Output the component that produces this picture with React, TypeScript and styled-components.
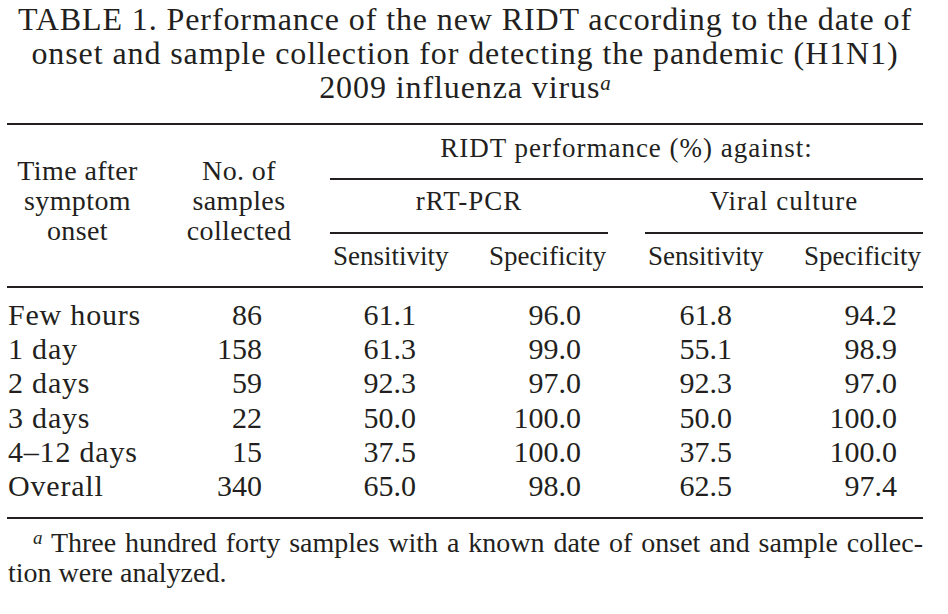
import React from "react";
import styled, { createGlobalStyle, css } from "styled-components";

const INK = "#231f20";
const COLS = "141px 182px 140px 138px 37px 140px 138px";

const GlobalStyle = createGlobalStyle`
  html, body {
    margin: 0;
    padding: 0;
    background: #fff;
  }
  body {
    font-family: "Liberation Serif", "Times New Roman", serif;
    color: ${INK};
  }
`;

const Page = styled.div`
  width: 916px;
  margin-left: 7px;
  padding-top: 2px;
`;

const Caption = styled.h1`
  margin: 0;
  font-weight: normal;
  font-size: 32px;
  line-height: 34px;
  letter-spacing: 0.9px;
  text-align: center;
`;

const Sup = styled.span<{ $size: number; $raise: number }>`
  display: inline-block;
  font-style: italic;
  font-size: ${(p) => p.$size}px;
  line-height: 14px;
  vertical-align: ${(p) => p.$raise}px;
  letter-spacing: 0;
  text-indent: 0;
`;

const Head = styled.div`
  display: grid;
  grid-template-columns: ${COLS};
  grid-template-rows: 55px 54px 52px;
  margin-top: 19px;
  border-top: 2px solid ${INK};
  border-bottom: 2px solid ${INK};
  font-size: 27px;
  line-height: 30px;
`;

const StubHead = styled.div<{ $col: number }>`
  grid-column: ${(p) => p.$col};
  grid-row: 1 / 4;
  padding-top: 31px;
  font-size: 28px;
  letter-spacing: 0.4px;
  text-align: center;
`;

const SpanHead = styled.div<{ $cols: string; $row: number; $pt: number }>`
  grid-column: ${(p) => p.$cols};
  grid-row: ${(p) => p.$row};
  padding-top: ${(p) => p.$pt}px;
  border-bottom: 2px solid ${INK};
  letter-spacing: 1px;
  text-align: center;
`;

const SubHead = styled.div<{ $col: number; $right?: boolean }>`
  grid-column: ${(p) => p.$col};
  grid-row: 3;
  padding-top: 7px;
  ${(p) =>
    p.$right
      ? css`
          text-align: right;
          padding-right: 2px;
        `
      : css`
          text-align: left;
          padding-left: 3px;
        `}
`;

const Body = styled.div`
  padding: 10px 0 14px;
  border-bottom: 2px solid ${INK};
`;

const Row = styled.div`
  display: grid;
  grid-template-columns: ${COLS};
  font-size: 30px;
  line-height: 34.2px;
`;

const Label = styled.span`
  grid-column: 1;
  padding-left: 1px;
  letter-spacing: 0.8px;
  white-space: nowrap;
`;

const Num = styled.span<{ $col: number; $pr: number }>`
  grid-column: ${(p) => p.$col};
  text-align: right;
  padding-right: ${(p) => p.$pr}px;
`;

const Footnote = styled.div`
  margin-top: 9px;
  padding-left: 1px;
  font-size: 28px;
  line-height: 30px;
`;

const FootLine = styled.div<{ $first?: boolean }>`
  ${(p) =>
    p.$first &&
    css`
      text-indent: 25px;
      text-align: justify;
      text-align-last: justify;
    `}
`;

const NUM_COLS = [
  { col: 2, pr: 68 },
  { col: 3, pr: 54 },
  { col: 4, pr: 27 },
  { col: 6, pr: 53 },
  { col: 7, pr: 26 },
];

const ROWS: [string, string, string, string, string, string][] = [
  ["Few hours", "86", "61.1", "96.0", "61.8", "94.2"],
  ["1 day", "158", "61.3", "99.0", "55.1", "98.9"],
  ["2 days", "59", "92.3", "97.0", "92.3", "97.0"],
  ["3 days", "22", "50.0", "100.0", "50.0", "100.0"],
  ["4\u201312 days", "15", "37.5", "100.0", "37.5", "100.0"],
  ["Overall", "340", "65.0", "98.0", "62.5", "97.4"],
];

const App = () => {
  return (
    <Page>
      <GlobalStyle />
      <Caption>
        TABLE 1. Performance of the new RIDT according to the date of
        <br />
        onset and sample collection for detecting the pandemic (H1N1)
        <br />
        2009 influenza virus
        <Sup $size={21} $raise={8}>
          a
        </Sup>
      </Caption>

      <Head>
        <StubHead $col={1}>
          Time after
          <br />
          symptom
          <br />
          onset
        </StubHead>
        <StubHead $col={2}>
          No. of
          <br />
          samples
          <br />
          collected
        </StubHead>
        <SpanHead $cols="3 / 8" $row={1} $pt={8}>
          RIDT performance (%) against:
        </SpanHead>
        <SpanHead $cols="3 / 5" $row={2} $pt={6}>
          rRT-PCR
        </SpanHead>
        <SpanHead $cols="6 / 8" $row={2} $pt={6}>
          Viral culture
        </SpanHead>
        <SubHead $col={3}>Sensitivity</SubHead>
        <SubHead $col={4} $right>
          Specificity
        </SubHead>
        <SubHead $col={6}>Sensitivity</SubHead>
        <SubHead $col={7} $right>
          Specificity
        </SubHead>
      </Head>

      <Body>
        {ROWS.map(([label, ...values]) => (
          <Row key={label}>
            <Label>{label}</Label>
            {values.map((v, i) => (
              <Num key={i} $col={NUM_COLS[i].col} $pr={NUM_COLS[i].pr}>
                {v}
              </Num>
            ))}
          </Row>
        ))}
      </Body>

      <Footnote>
        <FootLine $first>
          <Sup $size={19} $raise={8}>
            a
          </Sup>{" "}
          Three hundred forty samples with a known date of onset and sample
          collec-
        </FootLine>
        <FootLine>tion were analyzed.</FootLine>
      </Footnote>
    </Page>
  );
};

export default App;
